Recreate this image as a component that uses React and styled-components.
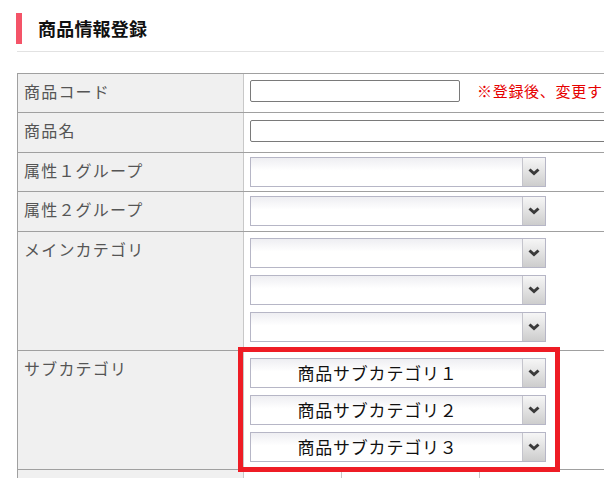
import React from 'react'
import styled, { createGlobalStyle } from 'styled-components'

const GlobalStyle = createGlobalStyle`
  html, body {
    margin: 0;
    padding: 0;
    background: #ffffff;
    overflow: hidden;
  }
  body {
    font-family: "Noto Sans CJK JP", "Noto Sans", sans-serif;
  }
  * { box-sizing: border-box; }
`

const Page = styled.div`
  width: 700px;
  padding: 13px 0 0 16px;
`

const Heading = styled.div`
  display: flex;
  align-items: center;
  height: 31px;
  &::before {
    content: '';
    display: block;
    width: 6px;
    height: 31px;
    background: #f45468;
  }
`

const Title = styled.h1`
  margin: 0 0 0 16px;
  font-size: 18px;
  font-weight: 700;
  color: #111;
  line-height: 31px;
  letter-spacing: 0.2px;
`

const Divider = styled.div`
  margin: 7px 0 0 1px;
  height: 1px;
  background: #e2e2e2;
`

const Table = styled.div`
  margin: 21px 0 0 1px;
  border-top: 1px solid #a0a0a0;
  border-left: 1px solid #a0a0a0;
`

const Row = styled.div`
  display: flex;
  height: ${p => p.h + 1}px;
  border-bottom: 1px solid #a0a0a0;
`

const Label = styled.div`
  width: 226px;
  flex: none;
  background: #f0f0f0;
  border-right: 1px solid #c8c8c8;
  padding: 5px 6px;
  font-size: 16px;
  line-height: 24px;
  letter-spacing: 1.2px;
  color: #555;
`

const Value = styled.div`
  position: relative;
  flex: 1;
  display: flex;
  flex-direction: ${p => (p.stack ? 'column' : 'row')};
  align-items: flex-start;
  gap: ${p => (p.stack ? '7px' : '17px')};
  padding: ${p => p.pad}px 0 0 6px;
`

const TextInput = styled.div`
  width: ${p => p.w};
  height: 22px;
  border: 1px solid #7a7a7a;
  border-radius: 2px;
  background: #fff;
  flex: none;
`

const Note = styled.span`
  color: #e60000;
  font-size: 15px;
  line-height: 22px;
  letter-spacing: 0.7px;
  white-space: nowrap;
`

const SelectBox = styled.div`
  width: 296px;
  height: 30px;
  display: flex;
  border: 1px solid #b6b6c6;
  background: linear-gradient(#eeeef2 0, #ffffff 45%, #ffffff 100%);
`

const SelectText = styled.div`
  flex: 1;
  padding-right: 18px;
  text-align: center;
  font-size: 17px;
  line-height: 28px;
  letter-spacing: 0.8px;
  color: #111;
`

const Arrow = styled.div`
  width: 23px;
  flex: none;
  display: flex;
  align-items: center;
  justify-content: center;
  border-left: 1px solid #c4c4cc;
  background: linear-gradient(#f6f6f6 0, #e2e2e2 50%, #cdcdcd 100%);
`

const Highlight = styled.div`
  position: absolute;
  left: -6px;
  top: -4px;
  width: 322px;
  height: 125px;
  border: 5px solid #ee1c25;
  pointer-events: none;
`

const Cell = styled.div`
  width: ${p => p.w};
  flex: none;
  border-right: 1px solid #c8c8c8;
  background: #fff;
`

const Select = ({ children }) => (
  <SelectBox>
    <SelectText>{children}</SelectText>
    <Arrow>
      <svg width="12" height="8" viewBox="0 0 12 8">
        <polyline points="1.5,1.5 6,5.5 10.5,1.5" fill="none" stroke="#3a3a3a" strokeWidth="3" />
      </svg>
    </Arrow>
  </SelectBox>
)

export default function App() {
  return (
    <Page>
      <GlobalStyle />
      <Heading>
        <Title>商品情報登録</Title>
      </Heading>
      <Divider />
      <Table>
        <Row h={38}>
          <Label>商品コード</Label>
          <Value pad={6}>
            <TextInput w="210px" />
            <Note>※登録後、変更す</Note>
          </Value>
        </Row>
        <Row h={39}>
          <Label>商品名</Label>
          <Value pad={7}>
            <TextInput w="420px" />
          </Value>
        </Row>
        <Row h={38}>
          <Label>属性１グループ</Label>
          <Value pad={4}>
            <Select />
          </Value>
        </Row>
        <Row h={39}>
          <Label>属性２グループ</Label>
          <Value pad={4}>
            <Select />
          </Value>
        </Row>
        <Row h={118}>
          <Label>メインカテゴリ</Label>
          <Value pad={6} stack>
            <Select />
            <Select />
            <Select />
          </Value>
        </Row>
        <Row h={118}>
          <Label>サブカテゴリ</Label>
          <Value pad={7} stack>
            <Select>商品サブカテゴリ１</Select>
            <Select>商品サブカテゴリ２</Select>
            <Select>商品サブカテゴリ３</Select>
            <Highlight />
          </Value>
        </Row>
        <Row h={30}>
          <Label />
          <Cell w="98px" />
          <Cell w="138px" />
          <Cell w="160px" />
        </Row>
      </Table>
    </Page>
  )
}
